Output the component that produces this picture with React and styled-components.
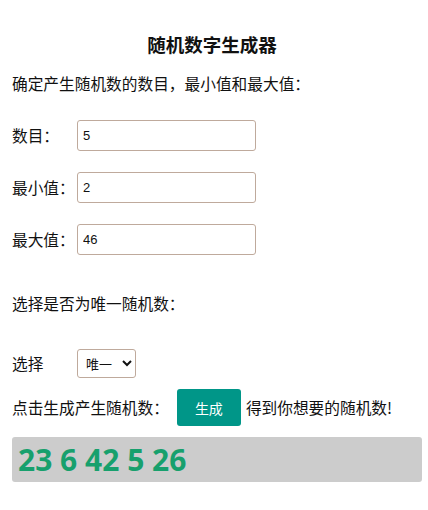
import React, {useState} from "react";
import styled, {createGlobalStyle} from "styled-components";

const GlobalStyle = createGlobalStyle`
  body {
    margin: 0;
    background: #fff;
    color: #111;
    font-family: "Noto Sans CJK SC", "Open Sans", sans-serif;
  }
`;

const Page = styled.div`
  padding: 32px 6px 0 12px;
`;

const Title = styled.h3`
  margin: 0 0 16px;
  padding-right: 10px;
  font-size: 18.5px;
  line-height: 24px;
  font-weight: 700;
  text-align: center;
`;

const Para = styled.p`
  margin: 0 0 ${p => p.gap || 0}px;
  font-size: 15.7px;
  line-height: 24px;
`;

const Row = styled.div`
  display: flex;
  align-items: center;
  margin-top: ${p => p.top || 0}px;
  font-size: 15.7px;
`;

const Label = styled.span`
  width: 65px;
  flex-shrink: 0;
`;

const Input = styled.input`
  box-sizing: border-box;
  width: 179px;
  height: 31px;
  padding: 0 5px;
  border: 1px solid #bfaa9c;
  border-radius: 3px;
  font-family: "Liberation Sans", Arial, sans-serif;
  font-size: 13px;
  color: #111;
  outline: none;
`;

const Select = styled.select`
  box-sizing: border-box;
  width: 59px;
  height: 29px;
  padding: 0 4px;
  border: 1px solid #bfaa9c;
  border-radius: 3px;
  background: #fff;
  font-family: "Noto Sans CJK SC", sans-serif;
  font-size: 13px;
  color: #111;
`;

const Button = styled.button`
  flex-shrink: 0;
  width: 64px;
  height: 37px;
  margin: 0 5px 0 8px;
  border: none;
  border-radius: 3px;
  background: #009688;
  color: #fff;
  font-family: "Noto Sans CJK SC", sans-serif;
  font-size: 14px;
`;

const Result = styled.div`
  box-sizing: border-box;
  height: 45px;
  margin-top: 11px;
  padding: 0 6px;
  border-radius: 3px;
  background: #cccccc;
  color: #17a06d;
  font-family: "Open Sans", sans-serif;
  font-size: 30px;
  font-weight: 700;
  line-height: 45px;
`;

const fields = [
  {label: "数目：", value: "5"},
  {label: "最小值：", value: "2"},
  {label: "最大值：", value: "46"},
];

export default function App() {
  const [vals, setVals] = useState(fields.map(f => f.value));
  const [nums] = useState([23, 6, 42, 5, 26]);

  return (
    <Page>
      <GlobalStyle/>
      <Title>随机数字生成器</Title>
      <Para gap={24}>确定产生随机数的数目，最小值和最大值：</Para>
      {fields.map((f, i) => (
        <Row key={f.label} top={i ? 21 : 0}>
          <Label>{f.label}</Label>
          <Input
            value={vals[i]}
            onChange={e => setVals(vals.map((v, j) => (j === i ? e.target.value : v)))}
          />
        </Row>
      ))}
      <Para style={{marginTop: 37}}>选择是否为唯一随机数：</Para>
      <Row top={33}>
        <Label>选择</Label>
        <Select defaultValue="unique">
          <option value="unique">唯一</option>
          <option value="repeat">可重复</option>
        </Select>
      </Row>
      <Row top={11}>
        <span>点击生成产生随机数：</span>
        <Button>生成</Button>
        <span>得到你想要的随机数!</span>
      </Row>
      <Result>{nums.join(" ")}</Result>
    </Page>
  );
}
